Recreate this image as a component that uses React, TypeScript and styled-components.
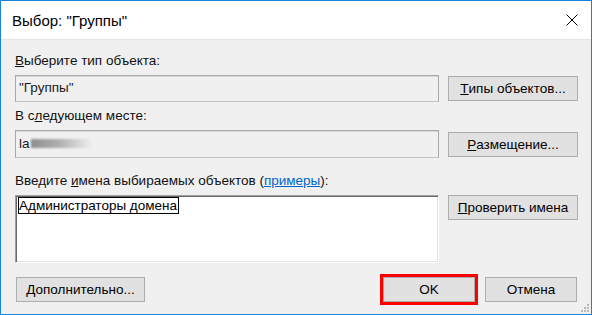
import styled, { createGlobalStyle } from 'styled-components';

const GlobalStyle = createGlobalStyle`
  html, body {
    margin: 0;
    padding: 0;
    background: #ffffff;
  }
  body {
    font-family: "Liberation Sans", Arial, sans-serif;
    font-size: 13.5px;
    color: #000000;
  }
`;

// Window frame
const Window = styled.div`
  position: relative;
  width: 592px;
  height: 315px;
  box-sizing: border-box;
  border: 1px solid #1883d7;
  display: flex;
  flex-direction: column;
  background: #f0f0f0;
  overflow: hidden;
`;

const TitleBar = styled.div`
  height: 38px;
  background: #ffffff;
  display: flex;
  align-items: center;
  justify-content: space-between;
  padding: 0 13px 0 11px;
  border-bottom: 1px solid #e5e5e5;
  flex-shrink: 0;
`;

const Title = styled.span`
  font-size: 15px;
  color: #000000;
  margin-top: 1px;
`;

const CloseIcon = styled.svg`
  width: 12px;
  height: 12px;
  display: block;
`;

const Body = styled.div`
  flex: 1;
  display: flex;
  flex-direction: column;
  padding: 13px 14px 0 14px;
`;

const Section = styled.div<{ $top?: number }>`
  display: flex;
  flex-direction: column;
  margin-top: ${(p) => p.$top ?? 0}px;
`;

const Label = styled.div`
  height: 16px;
  line-height: 16px;
  margin-bottom: 6px;
  white-space: nowrap;
  color: #111111;
`;

const Mn = styled.span`
  text-decoration: underline;
  text-underline-offset: 1px;
`;

const LinkText = styled.span`
  color: #0066cc;
  text-decoration: underline;
  text-underline-offset: 1px;
`;

const Row = styled.div<{ $align?: string }>`
  display: grid;
  grid-template-columns: 424px 130px;
  column-gap: 9px;
  align-items: ${(p) => p.$align ?? 'center'};
`;

const ReadOnlyBox = styled.div<{ $h: number }>`
  height: ${(p) => p.$h}px;
  box-sizing: border-box;
  border: 1px solid #a9a9a9;
  border-bottom-color: #c4c4c4;
  box-shadow: inset 0 1px 0 #d8d8d8;
  background: #f0f0f0;
  display: flex;
  align-items: center;
  padding: 0 4px 2px 3px;
  color: #1a1a1a;
  white-space: nowrap;
`;

const Blurred = styled.span`
  display: inline-block;
  width: 62px;
  height: 9px;
  margin-left: 1px;
  background: linear-gradient(90deg, #8e8e8e 0%, #b0b0b0 45%, #f0f0f0 100%);
  filter: blur(1px);
`;

const EditBox = styled.div`
  height: 68px;
  box-sizing: border-box;
  border-top: 1px solid #a0a0a0;
  border-left: 1px solid #a0a0a0;
  border-right: 1px solid #ffffff;
  border-bottom: 1px solid #ffffff;
  box-shadow: inset 1px 1px 0 #696969, inset -1px -1px 0 #e3e3e3;
  background: #ffffff;
  padding: 1px 0 0 2px;
`;

const SelectedName = styled.span`
  display: inline-block;
  border: 1px solid #000000;
  padding: 0 1px 0 0;
  line-height: 15px;
`;

const Button = styled.div<{ $w?: number }>`
  width: ${(p) => (p.$w ? `${p.$w}px` : '100%')};
  height: 25px;
  box-sizing: border-box;
  background: #e1e1e1;
  border: 1px solid #adadad;
  display: flex;
  align-items: center;
  justify-content: center;
  white-space: nowrap;
  color: #000000;
`;

const FocusFrame = styled.div`
  border: 3px solid #ff0000;
  display: flex;
`;

const Footer = styled.div`
  display: flex;
  align-items: center;
  margin-top: 11px;
  padding-left: 1px;
`;

const FooterRight = styled.div`
  margin-left: auto;
  display: flex;
  align-items: center;
  gap: 7px;
`;

const Grip = styled.svg`
  position: absolute;
  right: 1px;
  bottom: 1px;
  width: 11px;
  height: 11px;
`;

const App = () => {
  return (
    <>
      <GlobalStyle />
      <Window>
        <TitleBar>
          <Title>Выбор: "Группы"</Title>
          <CloseIcon viewBox="0 0 12 12">
            <path d="M0.5 0.5 L11.5 11.5 M11.5 0.5 L0.5 11.5" stroke="#000" strokeWidth="1" fill="none" />
          </CloseIcon>
        </TitleBar>
        <Body>
          <Section>
            <Label>
              <Mn>В</Mn>ыберите тип объекта:
            </Label>
            <Row>
              <ReadOnlyBox $h={27}>"Группы"</ReadOnlyBox>
              <Button>
                <Mn>Т</Mn>ипы объектов...
              </Button>
            </Row>
          </Section>
          <Section $top={6}>
            <Label>
              В с<Mn>л</Mn>едующем месте:
            </Label>
            <Row>
              <ReadOnlyBox $h={28}>
                la
                <Blurred />
              </ReadOnlyBox>
              <Button>
                <Mn>Р</Mn>азмещение...
              </Button>
            </Row>
          </Section>
          <Section $top={15}>
            <Label>
              Введите <Mn>и</Mn>мена выбираемых объектов (<LinkText>примеры</LinkText>):
            </Label>
            <Row $align="start">
              <EditBox>
                <SelectedName>Администраторы домена</SelectedName>
              </EditBox>
              <Button>
                <Mn>П</Mn>роверить имена
              </Button>
            </Row>
          </Section>
          <Footer>
            <Button $w={129}>
              <Mn>Д</Mn>ополнительно...
            </Button>
            <FooterRight>
              <FocusFrame>
                <Button $w={92}>OK</Button>
              </FocusFrame>
              <Button $w={92}>Отмена</Button>
            </FooterRight>
          </Footer>
        </Body>
        <Grip viewBox="0 0 11 11">
          {[
            [8, 0],
            [8, 3],
            [5, 3],
            [8, 6],
            [5, 6],
            [2, 6],
          ].map(([x, y]) => (
            <rect key={`${x}-${y}`} x={x} y={y + 2} width="2" height="2" fill="#b8b8b8" />
          ))}
        </Grip>
      </Window>
    </>
  );
};

export default App;
